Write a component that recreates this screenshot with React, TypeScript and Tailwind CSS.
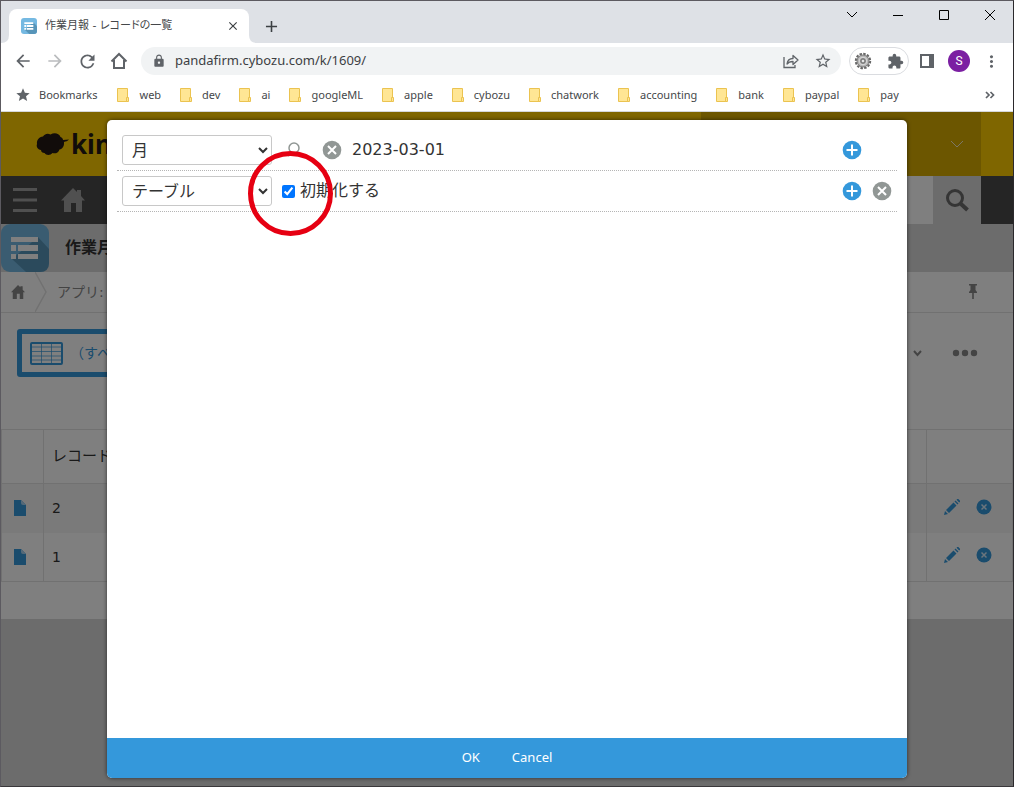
import type { ReactNode } from 'react'
import {
  MdAdd,
  MdArrowBack,
  MdArrowForward,
  MdClose,
  MdExtension,
  MdLock,
  MdMoreVert,
  MdRefresh,
  MdStar,
  MdStarBorder,
} from 'react-icons/md'

const bookmarks = ['web', 'dev', 'ai', 'googleML', 'apple', 'cybozu', 'chatwork', 'accounting', 'bank', 'paypal', 'pay']
const records = [2, 1]

const FolderIcon = () => (
  <svg width="12" height="14" viewBox="0 0 12 14" fill="#ffe694" stroke="#ebc350">
    <path d="M.5 .5h10v13H.5z" />
    <path d="M9.5 9.5h2v4h-2z" />
  </svg>
)

const AppIcon = ({ size }: { size: number }) => (
  <svg width={size} height={size} viewBox="0 0 48 48">
    <rect width="48" height="48" rx="9" fill="#75b9e2" />
    <path d="M37 13l11 12v14q0 9-9 9H25L11 35z" fill="#5795b9" />
    <path d="M10 13h27v5H10zM10 21h5v6h-5zM17 21h20v6H17zM10 30h5v5h-5zM17 30h20v5H17z" fill="#fff" />
  </svg>
)

const HouseIcon = ({ size }: { size: number }) => (
  <svg width={size} height={size} viewBox="0 0 24 24" fill="currentColor">
    <path d="M12 0l4 4V2h4v6l4 4.500h-3V24h-6v-9h-5v9H3V12.500H0z" />
  </svg>
)

const PlusIcon = () => (
  <svg width="20" height="20" viewBox="0 0 20 20">
    <circle cx="10" cy="10" r="9.300" fill="#3498db" />
    <path d="M10 4.500v11M4.500 10h11" stroke="#fff" strokeWidth="2" />
  </svg>
)

const CrossIcon = () => (
  <svg width="20" height="20" viewBox="0 0 20 20">
    <circle cx="10" cy="10" r="9.300" fill="#919795" />
    <path d="M6 6l8 8M14 6l-8 8" stroke="#fff" strokeWidth="2" />
  </svg>
)

const GearIcon = () => (
  <svg width="18" height="18" viewBox="0 0 18 18">
    <circle cx="9" cy="9" r="7.200" fill="none" stroke="#666" strokeWidth="2" strokeDasharray="2.500 1.270" />
    <circle cx="9" cy="9" r="6" fill="#b5b5b5" stroke="#777" />
    <circle cx="9" cy="9" r="3.800" fill="#999" stroke="#ddd" />
    <circle cx="9" cy="9" r="2" fill="#e5e5e5" stroke="#666" />
  </svg>
)

const IconButton = ({ label, className = '', children }: { label: string; className?: string; children: ReactNode }) => (
  <button aria-label={label} className={`flex h-8 w-8 shrink-0 items-center justify-center ${className}`}>
    {children}
  </button>
)

const Browser = () => (
  <header className="text-[#5f6368]">
    <div className="flex h-[42px] items-end bg-[#dee1e6] pl-2">
      <div className="relative flex h-[34px] w-60 items-center rounded-t-lg bg-white pr-2 pl-3">
        <AppIcon size={16} />
        <span className="ml-2 flex-1 truncate text-[11px] text-[#45474a] [font-feature-settings:'palt']">
          作業月報 - レコードの一覧
        </span>
        <button aria-label="Close tab" className="flex h-4 w-4 items-center justify-center text-[#3c4043]">
          <MdClose size={14} />
        </button>
        <svg className="absolute bottom-0 -left-2" width="8" height="8" viewBox="0 0 8 8" fill="#fff">
          <path d="M8 0v8H0q8 0 8-8z" />
        </svg>
        <svg className="absolute -right-2 bottom-0" width="8" height="8" viewBox="0 0 8 8" fill="#fff">
          <path d="M0 0v8h8Q0 8 0 0z" />
        </svg>
      </div>
      <button aria-label="New tab" className="ml-3 flex h-[34px] w-5 items-center justify-center text-[#3c4043]">
        <MdAdd size={19} />
      </button>
      <div className="ml-auto flex self-start text-black">
        <button aria-label="Search tabs" className="flex h-7 w-[46px] items-center justify-center">
          <svg width="12" height="8" viewBox="0 0 12 8" fill="none" stroke="currentColor">
            <path d="M1 1l5 5 5-5" />
          </svg>
        </button>
        <button aria-label="Minimize" className="flex h-7 w-[46px] items-center justify-center">
          <svg width="10" height="10" viewBox="0 0 10 10">
            <path d="M0 5h10v1H0z" />
          </svg>
        </button>
        <button aria-label="Maximize" className="flex h-7 w-[46px] items-center justify-center">
          <svg width="10" height="10" viewBox="0 0 10 10" fill="none" stroke="currentColor">
            <path d="M.5 .5h9v9h-9z" />
          </svg>
        </button>
        <button aria-label="Close" className="flex h-7 w-[46px] items-center justify-center">
          <svg width="10" height="10" viewBox="0 0 10 10" stroke="currentColor">
            <path d="M0 0l10 10M10 0L0 10" />
          </svg>
        </button>
      </div>
    </div>

    <div className="flex h-9 items-center bg-white px-[6px]">
      <IconButton label="Back"><MdArrowBack size={20} /></IconButton>
      <IconButton label="Forward" className="text-[#babcbe]"><MdArrowForward size={20} /></IconButton>
      <IconButton label="Reload"><MdRefresh size={21} /></IconButton>
      <IconButton label="Home">
        <svg width="18" height="18" viewBox="0 0 18 18" fill="none" stroke="currentColor" strokeWidth="2">
          <path d="M1.500 9.500L9 2l7.500 7.500M4 8v8h10V8" />
        </svg>
      </IconButton>
      <div className="ml-[6px] flex h-7 flex-1 items-center rounded-full bg-[#f1f3f4] pl-[11px] pr-[2px]">
        <MdLock size={14} />
        <input
          aria-label="Address"
          defaultValue="pandafirm.cybozu.com/k/1609/"
          className="ml-[9px] min-w-0 flex-1 bg-transparent font-[Noto_Sans] text-[13px] text-[#3c4043] outline-none"
        />
        <IconButton label="Share">
          <svg width="16" height="16" viewBox="0 0 16 16" fill="none" stroke="currentColor" strokeWidth="1.300">
            <path d="M1 4v10.500h11V12" />
            <path d="M4 11c.500-4 2.500-5.500 6-5.500V2.500L15 7l-5 4.500V8.500c-3 0-4.500.5-6 2.500z" strokeLinejoin="round" />
          </svg>
        </IconButton>
        <IconButton label="Bookmark this tab"><MdStarBorder size={18} /></IconButton>
      </div>
      <div className="ml-2 flex h-7 w-[60px] items-center justify-between rounded-full border border-[#dadce0] px-1">
        <button aria-label="Extension"><GearIcon /></button>
        <button aria-label="Extensions"><MdExtension size={17} /></button>
      </div>
      <IconButton label="Side panel" className="ml-[2px]">
        <svg width="14" height="14" viewBox="0 0 14 14">
          <path d="M1 1h12v12H1z" fill="none" stroke="currentColor" strokeWidth="2" />
          <path d="M9 1h4v12H9z" fill="currentColor" />
        </svg>
      </IconButton>
      <IconButton label="Profile">
        <span className="flex h-[22px] w-[22px] items-center justify-center rounded-full bg-[#7b1fa2] font-[Roboto] text-xs text-white">S</span>
      </IconButton>
      <IconButton label="Menu"><MdMoreVert size={19} /></IconButton>
    </div>

    <nav className="flex h-[33px] items-center border-b border-[#d5d7da] bg-white pr-[18px] pl-[14px] font-[Noto_Sans] text-[11px] text-[#45474a]">
      <a href="#bookmarks" className="flex items-center gap-2">
        <MdStar size={16} className="text-[#5f6368]" />
        Bookmarks
      </a>
      <div className="ml-5 flex gap-[19px]">
        {bookmarks.map(name => (
          <a href={`#${name}`} key={name} className="flex items-center gap-[10px]">
            <FolderIcon />
            {name}
          </a>
        ))}
      </div>
      <button aria-label="More bookmarks" className="ml-auto">
        <svg width="10" height="8" viewBox="0 0 10 8" fill="none" stroke="#5f6368" strokeWidth="1.700">
          <path d="M1 1l3 3-3 3M5.500 1l3 3-3 3" />
        </svg>
      </button>
    </nav>
  </header>
)

const RecordPage = () => (
  <div className="text-sm text-[#333]">
    <div className="flex h-16 justify-between bg-[#ffcc00]">
      <div className="flex items-center gap-[2px] pl-[35px]">
        <svg width="33" height="24" viewBox="0 0 33 24" fill="#231815">
          <path d="M7 4.500C9 1.500 12 1 14.500 2.500 18 .5 23 1 24.500 5c1.500.5 2.500 1.500 2.500 3l6-.5c-1.500 1.500-3 2-5 2.500.5 4-1.500 7-4.500 7.500C22.500 21 19 22 16.500 21c-2 2.500-6.500 2.500-8 0-2 0-3.500-1-3.500-3C1.500 17.500 0 14.500 1 12 .5 8 3 5 7 4.500z" />
        </svg>
        <span className="font-[Noto_Sans] text-[26px] leading-8 font-bold text-[#231815]">kintone</span>
      </div>
      <button aria-label="User menu" className="mr-8 flex w-[280px] items-center justify-end bg-[#d9ad00] pr-[17px]">
        <svg width="14" height="8" viewBox="0 0 14 8" fill="none" stroke="#fff" strokeOpacity=".8">
          <path d="M1 1l6 6 6-6" />
        </svg>
      </button>
    </div>

    <div className="flex h-12 items-center justify-between bg-[#4b4b4b] text-[#a0a0a0]">
      <div className="flex items-center gap-6 pl-3">
        <button aria-label="Menu">
          <svg width="24" height="24" viewBox="0 0 24 24" fill="currentColor">
            <path d="M0 0h24v3H0zM0 10.500h24v3H0zM0 21h24v3H0z" />
          </svg>
        </button>
        <a href="#portal" aria-label="Portal"><HouseIcon size={24} /></a>
      </div>
      <form className="mr-8 flex h-12">
        <input aria-label="Search" className="w-[232px] bg-white px-3" />
        <button aria-label="Search" type="button" className="flex w-12 items-center justify-center bg-[#d8d8d8] text-[#6a6a6a]">
          <svg width="24" height="24" viewBox="0 0 24 24" fill="none" stroke="currentColor">
            <circle cx="10" cy="10" r="7.500" strokeWidth="3" />
            <path d="M15.500 15.500l7 6.500" strokeWidth="4" />
          </svg>
        </button>
      </form>
    </div>

    <div className="flex h-12 items-center gap-4 bg-[#d8d8d8]">
      <AppIcon size={48} />
      <h1 className="text-base font-bold">作業月報</h1>
    </div>

    <div className="flex h-[41px] items-center border-b border-[#e3e3e3] bg-white text-[#888]">
      <a href="#portal" aria-label="Portal" className="pl-[10px]"><HouseIcon size={14} /></a>
      <svg className="ml-[10px]" width="12" height="40" viewBox="0 0 12 40" fill="none" stroke="#e3e3e3" strokeWidth="1.500">
        <path d="M0 0l11 20L0 40" />
      </svg>
      <a href="#app" className="ml-[10px]">アプリ: 作業月報</a>
      <button aria-label="Pin" className="mr-[35px] ml-auto">
        <svg width="10" height="16" viewBox="0 0 10 16" fill="currentColor">
          <path d="M1 0h8v1.500H7.500V6L9 8v1H1V8l1.500-2V1.500H1zM4.200 9h1.600v6H4.200z" />
        </svg>
      </button>
    </div>

    <div className="flex h-[116px] items-start justify-between bg-white px-4 pt-4 text-[#3498db]">
      <button className="flex h-12 w-[280px] items-center gap-[7px] rounded-[3px] border-[5px] border-[#3498db] pl-2">
        <svg width="33" height="23" viewBox="0 0 33 23" fill="none" stroke="currentColor">
          <rect x="1" y="1" width="31" height="21" rx="1" strokeWidth="2" />
          <path d="M1 5h31M1 9.500h31M1 14h31M1 18h31M11.500 1v21M21.500 1v21" strokeOpacity=".7" />
        </svg>
        （すべて）
      </button>
      <div className="flex h-12 items-center gap-[30px] pr-[19px] text-[#888]">
        <button aria-label="Views">
          <svg width="9" height="7" viewBox="0 0 9 7" fill="none" stroke="currentColor" strokeWidth="2">
            <path d="M1 1l3.500 4L8 1" />
          </svg>
        </button>
        <button aria-label="Options">
          <svg width="26" height="8" viewBox="0 0 26 8" fill="currentColor">
            <circle cx="4" cy="4" r="3.200" />
            <circle cx="13" cy="4" r="3.200" />
            <circle cx="22" cy="4" r="3.200" />
          </svg>
        </button>
      </div>
    </div>

    <div className="bg-white pb-[37px]">
      <table className="w-full table-fixed border-collapse border border-[#e3e3e3]">
        <thead>
          <tr className="h-[54px]">
            <th aria-label="Detail" className="w-[42px] border border-[#e3e3e3]" />
            <th className="border border-[#e3e3e3] pl-2 text-left text-[15px] font-normal">レコード番号</th>
            <th aria-label="Actions" className="w-[86px] border border-[#e3e3e3]" />
          </tr>
        </thead>
        <tbody>
          {records.map(id => (
            <tr key={id} className="h-[49px] odd:bg-[#f5f5f5]">
              <td className="border-r border-[#e3e3e3] pl-3">
                <a href={`#record-${id}`} aria-label={`Record ${id}`}>
                  <svg width="12" height="16" viewBox="0 0 12 16">
                    <path d="M0 0h7l5 5v11H0z" fill="#3498db" />
                    <path d="M7 0l5 5H9Q7 5 7 3z" fill="#a9d3f0" />
                  </svg>
                </a>
              </td>
              <td className="border-r border-[#e3e3e3] pl-2">{id}</td>
              <td>
                <div className="flex items-center justify-center gap-4 pr-1 pb-[3px]">
                  <button aria-label="Edit">
                    <svg width="16" height="16" viewBox="0 0 16 16" fill="#3498db">
                      <path d="M0 16l1-4 3 3zM2 11l7.500-7.500 3 3L5 14zM10.500 2.500l1-1 3 3-1 1zM12.500.8l.8-.8h1L16 1.700v1l-.8.8z" />
                    </svg>
                  </button>
                  <button aria-label="Delete">
                    <svg width="16" height="16" viewBox="0 0 16 16">
                      <circle cx="8" cy="8" r="7.500" fill="#3498db" />
                      <path d="M5.500 5.500l5 5M10.500 5.500l-5 5" stroke="#d6eaf8" strokeWidth="1.500" />
                    </svg>
                  </button>
                </div>
              </td>
            </tr>
          ))}
        </tbody>
      </table>
    </div>
  </div>
)

const FieldDialog = () => (
  <div role="dialog" aria-label="Fields" className="flex w-[800px] max-w-full flex-col overflow-hidden rounded-[5px] bg-white text-base text-[#333] shadow-[0_0_4px_rgba(0,0,0,0.6)]">
    <div className="flex-1 p-[10px]">
      <div className="flex h-[41px] items-center border-b border-dotted border-[#b5b5b5] pl-[5px]">
        <select aria-label="Field" className="h-[30px] w-[150px] rounded-[3px] border border-[#c8c8c8] bg-white pl-[5px]">
          <option>月</option>
        </select>
        <button aria-label="Search" className="ml-[14px]">
          <svg width="16" height="16" viewBox="0 0 16 16" fill="none" stroke="#919795">
            <circle cx="8" cy="6" r="5" strokeWidth="1.500" />
            <path d="M5 10l-3 4" strokeWidth="2" />
          </svg>
        </button>
        <button aria-label="Clear" className="ml-5"><CrossIcon /></button>
        <span className="ml-[10px] flex-1">2023-03-01</span>
        <button aria-label="Add row" className="mr-[35px]"><PlusIcon /></button>
      </div>
      <div className="relative flex h-[41px] items-center border-b border-dotted border-[#b5b5b5] pl-[5px]">
        <select aria-label="Field" className="h-[30px] w-[150px] rounded-[3px] border border-[#c8c8c8] bg-white pl-[5px]">
          <option>テーブル</option>
        </select>
        <label className="ml-[10px] flex flex-1 items-center gap-[5px]">
          <input type="checkbox" defaultChecked className="h-[13px] w-[13px]" />
          初期化する
        </label>
        <button aria-label="Add row" className="mr-[10px]"><PlusIcon /></button>
        <button aria-label="Delete row" className="mr-[5px]"><CrossIcon /></button>
        <span className="pointer-events-none absolute -top-5 left-[131px] h-[85px] w-[85px] rounded-full border-[5px] border-[#e60012]" />
      </div>
    </div>
    <div className="flex h-10 items-center justify-center bg-[#3498db] font-[Noto_Sans] text-[13px] text-white">
      <button className="px-4">OK</button>
      <button className="px-4">Cancel</button>
    </div>
  </div>
)

export default function App() {
  return (
    <div className="flex min-h-screen flex-col border border-[#5c5a60] border-r-[#2b292c] border-b-[#3a383b] font-['DejaVu_Sans','Noto_Sans_CJK_JP',sans-serif]">
      <Browser />
      <main className="relative flex-1 bg-[#d8d8d8]">
        <RecordPage />
        <div className="absolute inset-0 flex justify-center bg-black/50 py-2">
          <FieldDialog />
        </div>
      </main>
    </div>
  )
}
